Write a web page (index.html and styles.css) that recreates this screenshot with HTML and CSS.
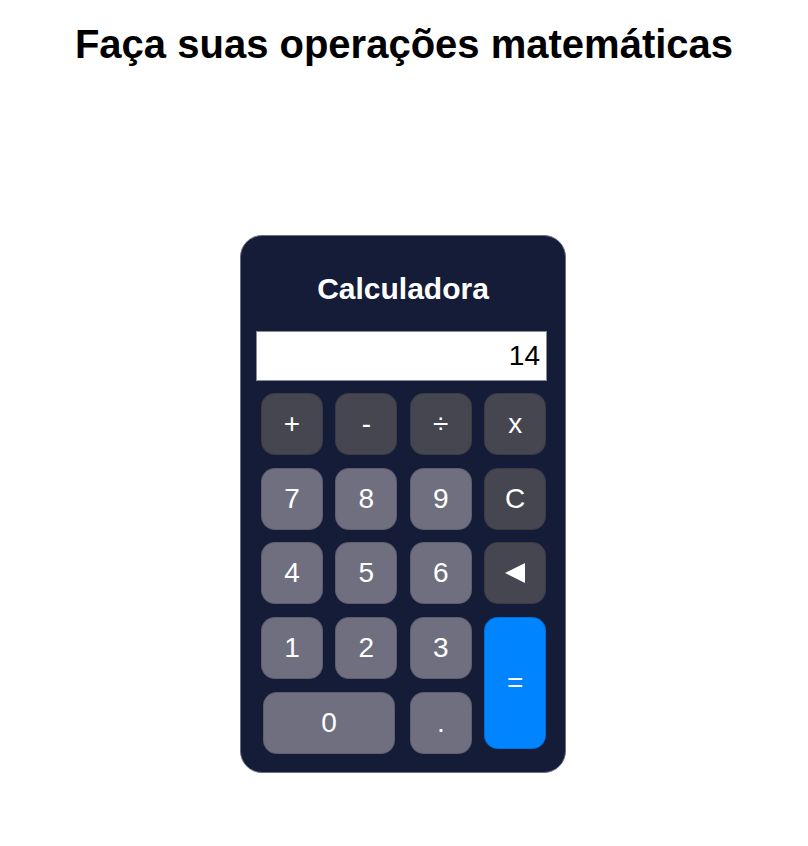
FILE: index.html
```html
<!DOCTYPE html>
<html lang="pt-BR">
<head>
<meta charset="utf-8">
<title>Calculadora</title>
<link rel="stylesheet" href="styles.css">
</head>
<body>
<h1 class="page-title">Faça suas operações matemáticas</h1>
<main class="wrap">
  <section class="calc">
    <h2 class="calc-title">Calculadora</h2>
    <div class="display">14</div>
    <div class="keys">
      <button class="key op">+</button>
      <button class="key op">-</button>
      <button class="key op">÷</button>
      <button class="key op">x</button>
      <button class="key num">7</button>
      <button class="key num">8</button>
      <button class="key num">9</button>
      <button class="key op">C</button>
      <button class="key num">4</button>
      <button class="key num">5</button>
      <button class="key num">6</button>
      <button class="key op back"><svg width="22" height="22" viewBox="0 0 22 22"><path d="M21 1 L1 11 L21 21 Z" fill="#fff"/></svg></button>
      <button class="key num">1</button>
      <button class="key num">2</button>
      <button class="key num">3</button>
      <button class="key eq">=</button>
      <button class="key num zero">0</button>
      <button class="key num">.</button>
    </div>
  </section>
</main>
</body>
</html>
```
FILE: styles.css
```css
html, body {
  margin: 0;
  padding: 0;
  background: #fff;
}
body {
  font-family: "Liberation Sans", Arial, sans-serif;
  color: #000;
}
.page-title {
  margin: 0;
  padding-top: 21px;
  text-align: center;
  font-size: 40px;
  font-weight: bold;
  line-height: 46px;
}
.wrap {
  display: flex;
  justify-content: center;
  padding-top: 168px;
  padding-right: 2px;
}
.calc {
  width: 324px;
  height: 536px;
  box-sizing: content-box;
  background: #141c38;
  border: 1px solid #6b6f80;
  border-radius: 22px;
  display: flex;
  flex-direction: column;
  align-items: flex-start;
}
.calc-title {
  margin: 36px 0 0;
  align-self: center;
  color: #fff;
  font-size: 30px;
  font-weight: bold;
  line-height: 34px;
}
.display {
  margin: 25px 0 0 15px;
  width: 291px;
  height: 50px;
  box-sizing: border-box;
  background: #fff;
  border: 1px solid #8a8d99;
  text-align: right;
  padding-right: 6px;
  font-size: 28px;
  line-height: 48px;
  color: #000;
}
.keys {
  margin: 12px 0 0 20px;
  display: grid;
  grid-template-columns: repeat(4, 62px);
  grid-auto-rows: 62px;
  column-gap: 12.4px;
  row-gap: 12.7px;
}
.key {
  border: 1px solid rgba(0,0,0,0.15);
  border-radius: 14px;
  color: #fff;
  font-family: "Liberation Sans", Arial, sans-serif;
  font-size: 28px;
  padding: 0;
  display: flex;
  align-items: center;
  justify-content: center;
}
.op { background: #45464f; }
.num { background: #706f80; }
.eq {
  background: #0084ff;
  grid-row: span 2;
  height: 132px;
  align-self: start;
}
.zero {
  grid-column: span 2;
  margin-left: 2px;
  width: 132px;
}
.back svg { display: block; }
```
